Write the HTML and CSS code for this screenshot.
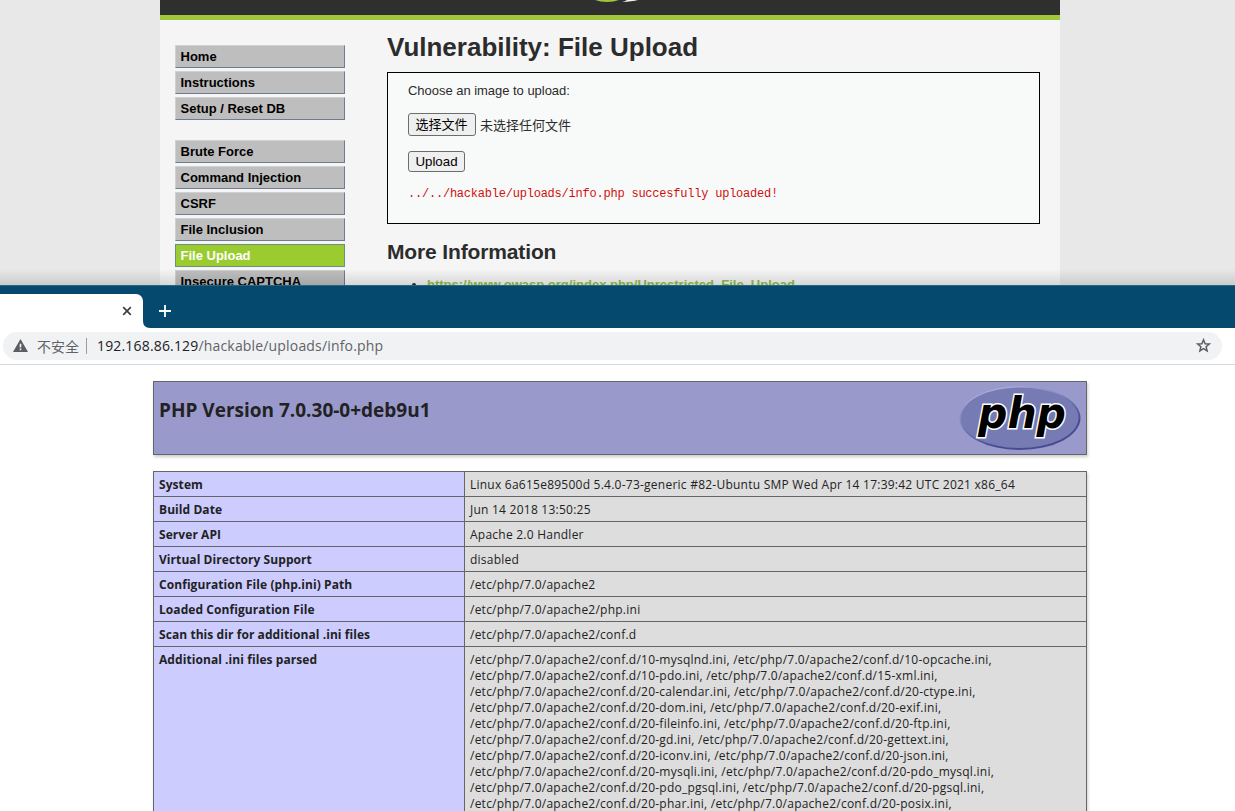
FILE: index.html
```
<!DOCTYPE html>
<html lang="zh-CN">
<head>
<meta charset="utf-8">
<title>phpinfo()</title>
<link rel="stylesheet" href="styles.css">
</head>
<body>
<section class="dvwa">
  <div class="dvwa-page">
    <header class="dvwa-header">
      <svg class="swoosh" width="60" height="3" viewBox="0 0 60 3"><ellipse cx="26" cy="-6" rx="18" ry="8" fill="#a0c63c"/><path d="M41 2Q51 1.5 57 0L46 0Q44 1.5 41 2Z" fill="#f4f4f4"/></svg>
    </header>
    <div class="dvwa-columns">
      <nav class="menu">
        <ul class="menu-block">
          <li class="menu-item">Home</li>
          <li class="menu-item">Instructions</li>
          <li class="menu-item">Setup / Reset DB</li>
        </ul>
        <ul class="menu-block">
          <li class="menu-item">Brute Force</li>
          <li class="menu-item">Command Injection</li>
          <li class="menu-item">CSRF</li>
          <li class="menu-item">File Inclusion</li>
          <li class="menu-item selected">File Upload</li>
          <li class="menu-item">Insecure CAPTCHA</li>
        </ul>
      </nav>
      <main class="content">
        <h1 class="title">Vulnerability: File Upload</h1>
        <div class="vulnerable">
          <p class="prompt">Choose an image to upload:</p>
          <div class="file-row"><button class="btn file-btn">选择文件</button><span class="file-name">未选择任何文件</span></div>
          <button class="btn upload-btn">Upload</button>
          <pre class="result">../../hackable/uploads/info.php succesfully uploaded!</pre>
        </div>
        <h2 class="subtitle">More Information</h2>
        <ul class="links"><li><a class="link">https://www.owasp.org/index.php/Unrestricted_File_Upload</a></li></ul>
      </main>
    </div>
  </div>
  <div class="window-shadow"></div>
</section>
<section class="browser">
  <div class="tabs">
    <div class="tab">
      <svg width="10" height="10" viewBox="0 0 10 10"><path d="M1.2 1.2L8.8 8.8M8.8 1.2L1.2 8.8" stroke="#3c4043" stroke-width="1.7"/></svg>
    </div>
    <div class="new-tab">
      <svg class="tab-foot" width="7" height="7" viewBox="0 0 7 7"><path d="M0 0Q0 7 7 7H0Z" fill="#fff"/></svg>
      <svg class="plus" width="12" height="12" viewBox="0 0 12 12"><path d="M6 0V12M0 6H12" stroke="#fff" stroke-width="1.8"/></svg>
    </div>
  </div>
  <div class="toolbar">
    <div class="omnibox">
      <svg class="warn" width="15" height="13" viewBox="0 0 15 13"><path fill="#5a5d61" fill-rule="evenodd" d="M7.5 0L15 13H0ZM6.7 4.7V8.5H8.3V4.7ZM6.7 9.6V11.3H8.3V9.6Z"/></svg>
      <span class="insecure">不安全</span>
      <span class="divider"></span>
      <span class="url"><span class="host">192.168.86.129</span>/hackable/uploads/info.php</span>
      <svg class="star" width="15" height="15" viewBox="0 0 15 15"><path d="M7.5 1.8L9.1 5.7L13.3 6L10.1 8.7L11.1 12.8L7.5 10.6L3.9 12.8L4.9 8.7L1.7 6L5.9 5.7Z" fill="none" stroke="#5a5d61" stroke-width="1.5"/></svg>
    </div>
  </div>
  <div class="phpinfo">
    <div class="banner">
      <h1 class="version">PHP Version 7.0.30-0+deb9u1</h1>
      <svg class="php-logo" width="122" height="66" viewBox="0 0 122 66">
        <defs><linearGradient id="rim" x1="0.2" y1="0" x2="0.75" y2="1"><stop offset="0" stop-color="#b6b7df"/><stop offset="0.45" stop-color="#7378b2"/><stop offset="0.75" stop-color="#484b91"/><stop offset="1" stop-color="#484b91"/></linearGradient></defs>
        <ellipse cx="61" cy="33" rx="60.5" ry="32" fill="url(#rim)"/>
        <ellipse cx="60.7" cy="32.8" rx="58.8" ry="30.3" fill="#777bb3"/>
        <text class="php-word" x="19" y="42.5" textLength="88" lengthAdjust="spacingAndGlyphs">php</text>
      </svg>
    </div>
    <table class="info">
      <tr><th>System</th><td class="system">Linux 6a615e89500d 5.4.0-73-generic #82-Ubuntu SMP Wed Apr 14 17:39:42 UTC 2021 x86_64</td></tr>
      <tr><th>Build Date</th><td>Jun 14 2018 13:50:25</td></tr>
      <tr><th>Server API</th><td>Apache 2.0 Handler</td></tr>
      <tr><th>Virtual Directory Support</th><td>disabled</td></tr>
      <tr><th>Configuration File (php.ini) Path</th><td>/etc/php/7.0/apache2</td></tr>
      <tr><th>Loaded Configuration File</th><td>/etc/php/7.0/apache2/php.ini</td></tr>
      <tr><th>Scan this dir for additional .ini files</th><td>/etc/php/7.0/apache2/conf.d</td></tr>
      <tr><th>Additional .ini files parsed</th><td>/etc/php/7.0/apache2/conf.d/10-mysqlnd.ini, /etc/php/7.0/apache2/conf.d/10-opcache.ini,<br>/etc/php/7.0/apache2/conf.d/10-pdo.ini, /etc/php/7.0/apache2/conf.d/15-xml.ini,<br>/etc/php/7.0/apache2/conf.d/20-calendar.ini, /etc/php/7.0/apache2/conf.d/20-ctype.ini,<br>/etc/php/7.0/apache2/conf.d/20-dom.ini, /etc/php/7.0/apache2/conf.d/20-exif.ini,<br>/etc/php/7.0/apache2/conf.d/20-fileinfo.ini, /etc/php/7.0/apache2/conf.d/20-ftp.ini,<br>/etc/php/7.0/apache2/conf.d/20-gd.ini, /etc/php/7.0/apache2/conf.d/20-gettext.ini,<br>/etc/php/7.0/apache2/conf.d/20-iconv.ini, /etc/php/7.0/apache2/conf.d/20-json.ini,<br>/etc/php/7.0/apache2/conf.d/20-mysqli.ini, /etc/php/7.0/apache2/conf.d/20-pdo_mysql.ini,<br>/etc/php/7.0/apache2/conf.d/20-pdo_pgsql.ini, /etc/php/7.0/apache2/conf.d/20-pgsql.ini,<br>/etc/php/7.0/apache2/conf.d/20-phar.ini, /etc/php/7.0/apache2/conf.d/20-posix.ini,</td></tr>
    </table>
  </div>
</section>
</body>
</html>
```
FILE: styles.css
```
* { box-sizing: border-box; }
body {
  margin: 0;
  width: 1235px;
  height: 811px;
  overflow: hidden;
  background: #fff;
  font-family: "Liberation Sans", "Noto Sans CJK SC", sans-serif;
}
svg { display: block; flex: none; }
h1, h2, p, ul, pre { margin: 0; padding: 0; }

/* DVWA page */
.dvwa {
  position: relative;
  height: 285px;
  overflow: hidden;
  background: #e8e8e8;
}
.dvwa-page {
  width: 900px;
  height: 400px;
  margin-left: 160px;
  background: #f5f5f5;
}
.dvwa-header {
  height: 20px;
  padding-left: 421px;
  background: #2f2f2f;
  border-bottom: 5px solid #a0c63c;
}
.dvwa-columns { display: flex; padding-left: 15px; }
.menu { width: 170px; padding-top: 25px; }
.menu-block {
  display: flex;
  flex-direction: column;
  gap: 3px;
  margin-bottom: 20px;
  list-style: none;
}
.menu-item {
  height: 23px;
  padding-left: 4.5px;
  border: 1px solid;
  border-color: #d0d0d0 #6f7a94 #6f7a94 #d0d0d0;
  background: #bebebe;
  color: #000;
  font-size: 13px;
  font-weight: bold;
  line-height: 22px;
}
.menu-item.selected {
  background: #9acc30;
  border-color: #6d8f80;
  color: #fff;
}
.content { width: 653px; margin-left: 42px; color: #2c2c2c; }
.title { padding-top: 11px; height: 52px; font-size: 26px; line-height: 32px; }
.vulnerable {
  display: flex;
  flex-direction: column;
  align-items: flex-start;
  height: 152px;
  padding: 9px 20px 0;
  border: 1px solid #000;
  background: #f8faf9;
}
.prompt { font-size: 13px; line-height: 18px; letter-spacing: -0.03px; }
.file-row { display: flex; align-items: center; gap: 4px; margin: 13px 0 15px; font-size: 13px; }
.btn {
  padding: 0 7px;
  border: 1px solid #6c6c6c;
  border-radius: 3px;
  background: #efefef;
  color: #000;
  font-family: inherit;
  font-size: 13.3px;
  line-height: 18px;
}
.file-btn { width: 68px; height: 23px; padding: 0 1px 0 0; font-size: 13px; }
.upload-btn { width: 57px; height: 21px; padding: 0 6px; }
.result {
  margin-top: 14px;
  color: #d01010;
  font-family: "Liberation Mono", monospace;
  font-size: 12px;
  line-height: 16px;
  letter-spacing: -0.22px;
}
.subtitle { margin-top: 15px; font-size: 21px; line-height: 26px; letter-spacing: -0.14px; }
.links { padding: 10px 0 0 40px; font-size: 13px; line-height: 19px; }
.link { color: #8fc044; font-weight: bold; text-decoration: underline; }
.window-shadow {
  position: absolute;
  right: 0;
  bottom: 0;
  left: 0;
  height: 16px;
  background: linear-gradient(rgba(0, 0, 0, 0), rgba(0, 0, 0, 0.12));
}

/* Browser window */
.browser { height: 526px; overflow: hidden; background: #fff; }
.tabs {
  display: flex;
  height: 43px;
  padding-top: 9px;
  background: #054a6e;
  box-shadow: inset 0 1px #286680;
}
.tab {
  display: flex;
  align-items: center;
  justify-content: flex-end;
  width: 143px;
  padding-right: 11px;
  border-top-right-radius: 7px;
  background: #fff;
}
.new-tab { display: flex; }
.tab-foot { align-self: flex-end; }
.plus { margin: 11px 0 0 9px; }
.toolbar { height: 37px; padding: 4px 13px 5px 3px; border-bottom: 1px solid #d8dadc; }
.omnibox {
  display: flex;
  align-items: center;
  height: 28px;
  padding: 0 11px 1px 10px;
  border-radius: 14px;
  background: #f0f2f4;
  color: #5f6368;
  font-family: "Open Sans", "Noto Sans CJK SC", sans-serif;
  font-size: 14px;
  white-space: nowrap;
}
.insecure { margin-left: 9px; }
.divider { width: 1px; height: 16px; margin: 0 10px 0 7px; background: #9a9da1; }
.url { letter-spacing: 0.17px; }
.host { color: #202124; }
.star { margin-left: auto; }

/* phpinfo() */
.phpinfo {
  width: 934px;
  margin: 16px 0 0 153px;
  color: #222;
  font-family: "Open Sans", "Noto Sans", sans-serif;
}
.banner {
  display: flex;
  justify-content: space-between;
  height: 74px;
  padding: 3px 5px 0 5px;
  border: 1px solid #666;
  background: #9999cc;
  box-shadow: 1px 2px 3px #ccc;
}
.version { padding-top: 11px; font-size: 19px; line-height: 28px; }
.php-word {
  font: italic bold 42px "DejaVu Sans", sans-serif;
  fill: #000;
  stroke: #fff;
  stroke-width: 3px;
  paint-order: stroke;
}
.info {
  width: 934px;
  margin-top: 16px;
  border-collapse: collapse;
  table-layout: fixed;
  box-shadow: 1px 2px 3px #ccc;
  font-size: 12px;
  line-height: 16px;
}
.info th, .info td {
  padding: 5px 5px 3px;
  border: 1px solid #666;
  text-align: left;
  vertical-align: top;
  white-space: nowrap;
}
.info th { width: 311px; background: #ccccff; letter-spacing: 0.07px; }
.info td { background: #dddddd; letter-spacing: 0.24px; }
```
